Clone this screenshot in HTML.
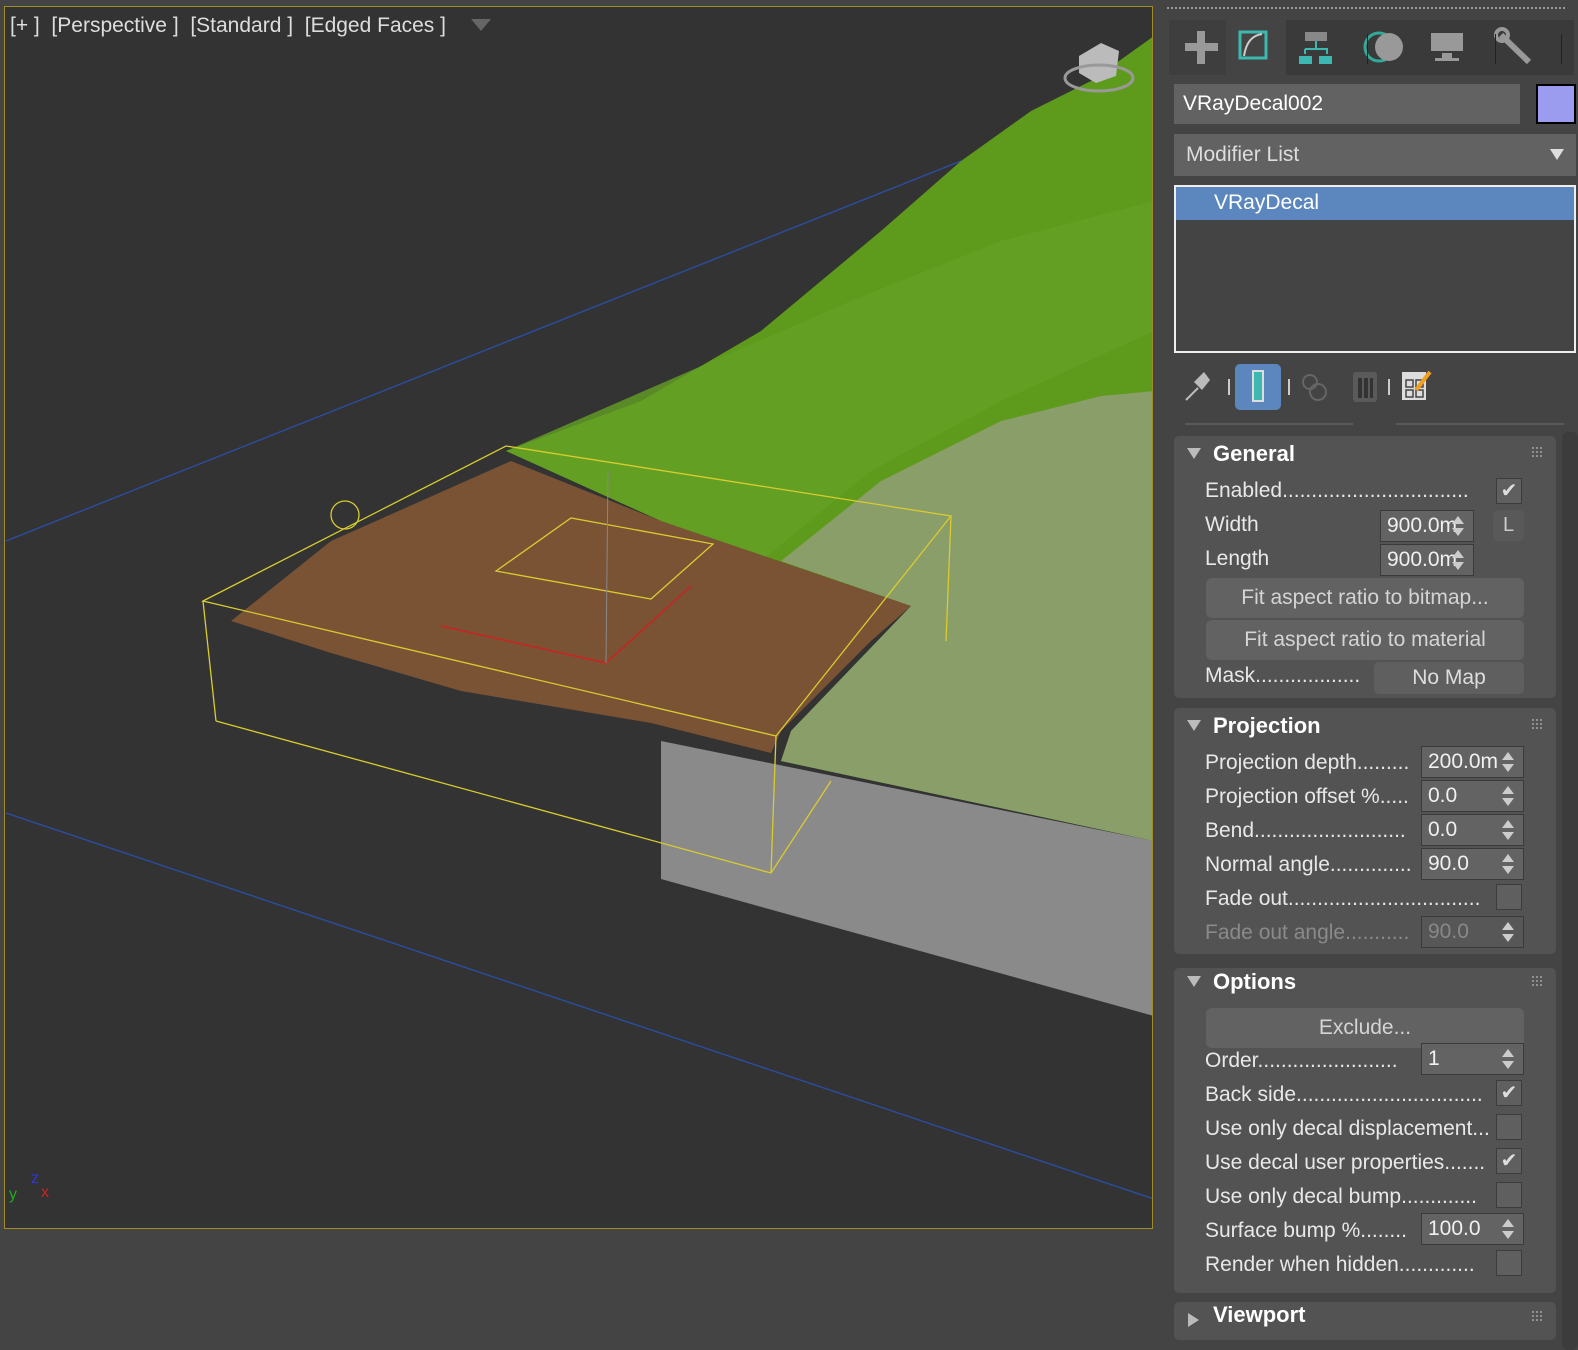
<!DOCTYPE html>
<html><head><meta charset="utf-8"><style>
*{margin:0;padding:0;box-sizing:border-box}
body{width:1578px;height:1350px;background:#444;position:relative;overflow:hidden;font-family:"Liberation Sans",sans-serif;color:#e6e6e6}
.a{position:absolute}
.lbl{position:absolute;left:1205px;font-size:21px;white-space:nowrap;color:#e8e8e8;margin-top:1px}
.roll{position:absolute;left:1174px;width:382px;background:#535353;border-radius:5px}
.hd{position:absolute;left:1213px;font-size:22px;font-weight:bold;color:#fff;margin-top:1px}
.tri{position:absolute;left:1187px;width:0;height:0;border-left:7px solid transparent;border-right:7px solid transparent;border-top:11px solid #bbb}
.grip{position:absolute;left:1531px;width:12px;height:12px;background-image:radial-gradient(#999 35%,transparent 40%);background-size:4px 4px}
.spin{position:absolute;left:1421px;width:103px;height:32px;background:#636363;border:1px solid #3a3a3a;font-size:21px;padding:3px 0 0 6px;color:#f0f0f0}
.spin:after{content:"";position:absolute;right:9px;top:5px;border-left:6px solid transparent;border-right:6px solid transparent;border-bottom:8px solid #ccc}
.spin:before{content:"";position:absolute;right:9px;bottom:5px;border-left:6px solid transparent;border-right:6px solid transparent;border-top:8px solid #ccc}
.cb{position:absolute;left:1496px;width:26px;height:26px;background:#5f5f5f;border:1px solid #3c3c3c;color:#ddd;font-size:20px;text-align:center;line-height:24px}
.btn{position:absolute;left:1206px;width:318px;height:40px;background:#626262;border-radius:6px;font-size:21px;text-align:center;line-height:40px;color:#d4d4d4}
.dis{color:#8a8a8a}
</style></head><body>
<div class="a" style="left:4px;top:6px;width:1149px;height:1223px;background:#333;border:1px solid #a08a2a;overflow:hidden">
<svg width="1149" height="1223" viewBox="4 6 1149 1223" style="position:absolute;left:0;top:0">
<line x1="5" y1="540" x2="960" y2="160" stroke="#2a4fa8" stroke-width="1.3"/>
<line x1="5" y1="812" x2="1153" y2="1198" stroke="#2a4fa8" stroke-width="1.3"/>
<polygon points="660,740 1153,840 1153,1015 660,878" fill="#8a8a8a"/>
<polygon points="505,450 640,400 760,330 880,230 960,160 1030,110 1090,80 1153,35 1153,840 780,760 790,730 910,605 660,520" fill="#5e9a1c"/>
<polygon points="780,560 880,480 1000,420 1100,395 1153,390 1153,840 780,760 790,730 910,605" fill="#8a9e6a"/>
<polygon points="505,450 660,520 760,560 870,470 1000,400 1153,330 1153,200 1000,240 850,300" fill="#64a024" opacity=".8"/>
<polygon points="230,620 330,540 510,460 660,520 910,605 870,640 780,730 770,752 650,722 460,690 330,652" fill="#7a5234"/>
<g fill="none" stroke="#d8cc30" stroke-width="1.3">
<polygon points="202,600 505,445 950,515 775,735"/>
<line x1="202" y1="600" x2="215" y2="720"/><line x1="215" y1="720" x2="770" y2="872"/>
<line x1="775" y1="735" x2="770" y2="872"/><line x1="950" y1="515" x2="945" y2="640"/><line x1="770" y1="872" x2="830" y2="780"/>
<polygon points="495,570 570,517 712,543 650,598"/>
<circle cx="344" cy="514" r="14"/>
</g>
<line x1="440" y1="625" x2="605" y2="662" stroke="#c22" stroke-width="1.5"/>
<line x1="605" y1="662" x2="690" y2="585" stroke="#c22" stroke-width="1.5"/>
<line x1="607" y1="470" x2="605" y2="662" stroke="#888" stroke-width="1"/>
<text x="8" y="1198" fill="#2a2" font-size="16">y</text><text x="30" y="1182" fill="#33d" font-size="16">z</text><text x="40" y="1196" fill="#c22" font-size="16">x</text>
<polygon points="1078,55 1100,42 1118,50 1115,75 1095,82 1078,72" fill="#bbb"/>
<ellipse cx="1098" cy="77" rx="34" ry="13" fill="none" stroke="#999" stroke-width="3"/>
</svg>
<div class="a" style="left:5px;top:7px;font-size:21px;color:#ddd;white-space:nowrap">[+ ]&nbsp; [Perspective ]&nbsp; [Standard ]&nbsp; [Edged Faces ]</div>
<div class="a" style="left:466px;top:12px;border-left:10px solid transparent;border-right:10px solid transparent;border-top:12px solid #666"></div>
</div>
<div class="a" style="left:1160px;top:0;width:418px;height:1350px;background:#444"></div>
<div class="a" style="left:1166px;top:6px;width:400px;height:5px;background-image:radial-gradient(#999 40%,transparent 45%);background-size:4px 4px"></div>
<div class="a" style="left:1169px;top:20px;width:405px;height:55px;background:#3a3a3a"></div>
<div class="a" style="left:1169px;top:20px;width:57px;height:55px;background:#3e3e3e"></div>
<div class="a" style="left:1226px;top:20px;width:60px;height:56px;background:#444"></div>
<svg class="a" style="left:1169px;top:20px" width="405" height="56">
<rect x="16" y="23" width="33" height="8" fill="#999"/><rect x="28" y="11" width="8" height="33" fill="#999"/>
<rect x="71" y="12" width="26" height="26" fill="none" stroke="#3cb8b0" stroke-width="3"/>
<path d="M75 36 Q78 16 93 14" fill="none" stroke="#ccc" stroke-width="2"/>
<rect x="136" y="12" width="22" height="9" fill="#888"/><path d="M147 21v8M136 29h22v5M136 29v5" stroke="#3cb8b0" stroke-width="2" fill="none"/><rect x="130" y="36" width="13" height="8" fill="#3cb8b0"/><rect x="150" y="36" width="13" height="8" fill="#3cb8b0"/>
<circle cx="210" cy="27" r="14" fill="none" stroke="#3a9" stroke-width="3"/><circle cx="220" cy="27" r="14" fill="#999"/>
<rect x="262" y="13" width="32" height="18" fill="#999"/><rect x="273" y="33" width="10" height="5" fill="#999"/><rect x="266" y="38" width="24" height="3" fill="#999"/>
<path d="M332 15 L360 42" stroke="#999" stroke-width="6"/><circle cx="333" cy="15" r="6" fill="none" stroke="#999" stroke-width="4"/>
<rect x="198" y="14" width="1" height="30" fill="#222"/><rect x="326" y="14" width="1" height="30" fill="#222"/><rect x="392" y="14" width="1" height="30" fill="#222"/>
</svg>
<div class="a" style="left:1174px;top:84px;width:346px;height:40px;background:#626262;font-size:21px;padding:8px 0 0 9px;color:#fff">VRayDecal002</div>
<div class="a" style="left:1536px;top:84px;width:40px;height:40px;background:#9b9bef;border:2px solid #000"></div>
<div class="a" style="left:1174px;top:134px;width:402px;height:42px;background:#626262;font-size:21px;padding:9px 0 0 12px;color:#ddd">Modifier List</div>
<div class="a" style="left:1550px;top:149px;border-left:7px solid transparent;border-right:7px solid transparent;border-top:11px solid #ddd"></div>
<div class="a" style="left:1174px;top:185px;width:402px;height:168px;background:#444;border:2px solid #eee"></div>
<div class="a" style="left:1176px;top:187px;width:398px;height:33px;background:#5c87be;font-size:21px;padding:4px 0 0 38px;color:#fff">VRayDecal</div>
<svg class="a" style="left:1180px;top:360px" width="270" height="50">
<path d="M6 40 L18 28" stroke="#bbb" stroke-width="2"/><path d="M14 22 L24 12 L30 20 L22 30Z" fill="#bbb"/>
<rect x="48" y="19" width="2" height="16" fill="#ccc"/>
<rect x="55" y="4" width="46" height="46" rx="5" fill="#5c87be"/><rect x="73" y="11" width="10" height="30" fill="#3cb8b0" stroke="#ddd" stroke-width="2"/>
<rect x="108" y="19" width="2" height="16" fill="#ccc"/>
<circle cx="130" cy="22" r="7" fill="none" stroke="#666" stroke-width="2"/><circle cx="138" cy="32" r="8" fill="none" stroke="#666" stroke-width="2"/>
<rect x="173" y="12" width="24" height="30" rx="3" fill="#5a5a5a"/><rect x="178" y="18" width="4" height="20" fill="#333"/><rect x="184" y="18" width="4" height="20" fill="#333"/><rect x="190" y="18" width="3" height="20" fill="#333"/>
<rect x="208" y="19" width="2" height="16" fill="#ccc"/>
<rect x="222" y="12" width="24" height="28" fill="#ddd"/><path d="M226 20h7v7h-7zM236 20h7v7h-7zM226 30h7v7h-7zM236 30h7v7h-7z" fill="none" stroke="#444" stroke-width="1.5"/><path d="M236 30 L250 12" stroke="#f0a020" stroke-width="4"/>
</svg>
<div class="a" style="left:1185px;top:423px;width:168px;height:2px;background:#5a5a5a"></div>
<div class="a" style="left:1396px;top:423px;width:168px;height:2px;background:#5a5a5a"></div>
<div class="a" style="left:1562px;top:432px;width:16px;height:918px;background:#3c3c3c;border-radius:6px"></div>

<div class="roll" style="top:436px;height:262px"></div>
<div class="tri" style="top:448px"></div><div class="hd" style="top:440px">General</div><div class="grip" style="top:446px"></div>
<div class="lbl" style="top:478px">Enabled................................</div><div class="cb" style="top:478px">✔</div>
<div class="lbl" style="top:512px">Width</div><div class="spin" style="left:1380px;width:94px;top:510px">900.0m</div>
<div class="a" style="left:1493px;top:510px;width:31px;height:31px;background:#595959;border-radius:5px;text-align:center;line-height:31px;font-size:20px;color:#ccc">L</div>
<div class="lbl" style="top:546px">Length</div><div class="spin" style="left:1380px;width:94px;top:544px">900.0m</div>
<div class="btn" style="top:578px">Fit aspect ratio to bitmap...</div>
<div class="btn" style="top:620px">Fit aspect ratio to material</div>
<div class="lbl" style="top:663px">Mask..................</div>
<div class="a" style="left:1374px;top:662px;width:150px;height:32px;background:#5f5f5f;border-radius:5px;text-align:center;line-height:32px;font-size:21px;color:#ddd">No Map</div>

<div class="roll" style="top:708px;height:246px"></div>
<div class="tri" style="top:720px"></div><div class="hd" style="top:712px">Projection</div><div class="grip" style="top:718px"></div>
<div class="lbl" style="top:750px">Projection depth.........</div><div class="spin" style="top:746px">200.0m</div>
<div class="lbl" style="top:784px">Projection offset %.....</div><div class="spin" style="top:780px">0.0</div>
<div class="lbl" style="top:818px">Bend..........................</div><div class="spin" style="top:814px">0.0</div>
<div class="lbl" style="top:852px">Normal angle..............</div><div class="spin" style="top:848px">90.0</div>
<div class="lbl" style="top:886px">Fade out.................................</div><div class="cb" style="top:884px"></div>
<div class="lbl dis" style="top:920px">Fade out angle...........</div><div class="spin dis" style="top:916px;background:#575757;color:#888">90.0</div>

<div class="roll" style="top:968px;height:325px"></div>
<div class="tri" style="top:976px"></div><div class="hd" style="top:968px">Options</div><div class="grip" style="top:975px"></div>
<div class="btn" style="top:1008px">Exclude...</div>
<div class="lbl" style="top:1048px">Order........................</div><div class="spin" style="top:1043px">1</div>
<div class="lbl" style="top:1082px">Back side................................</div><div class="cb" style="top:1080px">✔</div>
<div class="lbl" style="top:1116px">Use only decal displacement...</div><div class="cb" style="top:1114px"></div>
<div class="lbl" style="top:1150px">Use decal user properties.......</div><div class="cb" style="top:1148px">✔</div>
<div class="lbl" style="top:1184px">Use only decal bump.............</div><div class="cb" style="top:1182px"></div>
<div class="lbl" style="top:1218px">Surface bump %........</div><div class="spin" style="top:1213px">100.0</div>
<div class="lbl" style="top:1252px">Render when hidden.............</div><div class="cb" style="top:1250px"></div>

<div class="roll" style="top:1302px;height:38px"></div>
<div class="a" style="left:1188px;top:1313px;border-top:7px solid transparent;border-bottom:7px solid transparent;border-left:11px solid #bbb"></div>
<div class="hd" style="top:1301px">Viewport</div><div class="grip" style="top:1310px"></div>
</body></html>
